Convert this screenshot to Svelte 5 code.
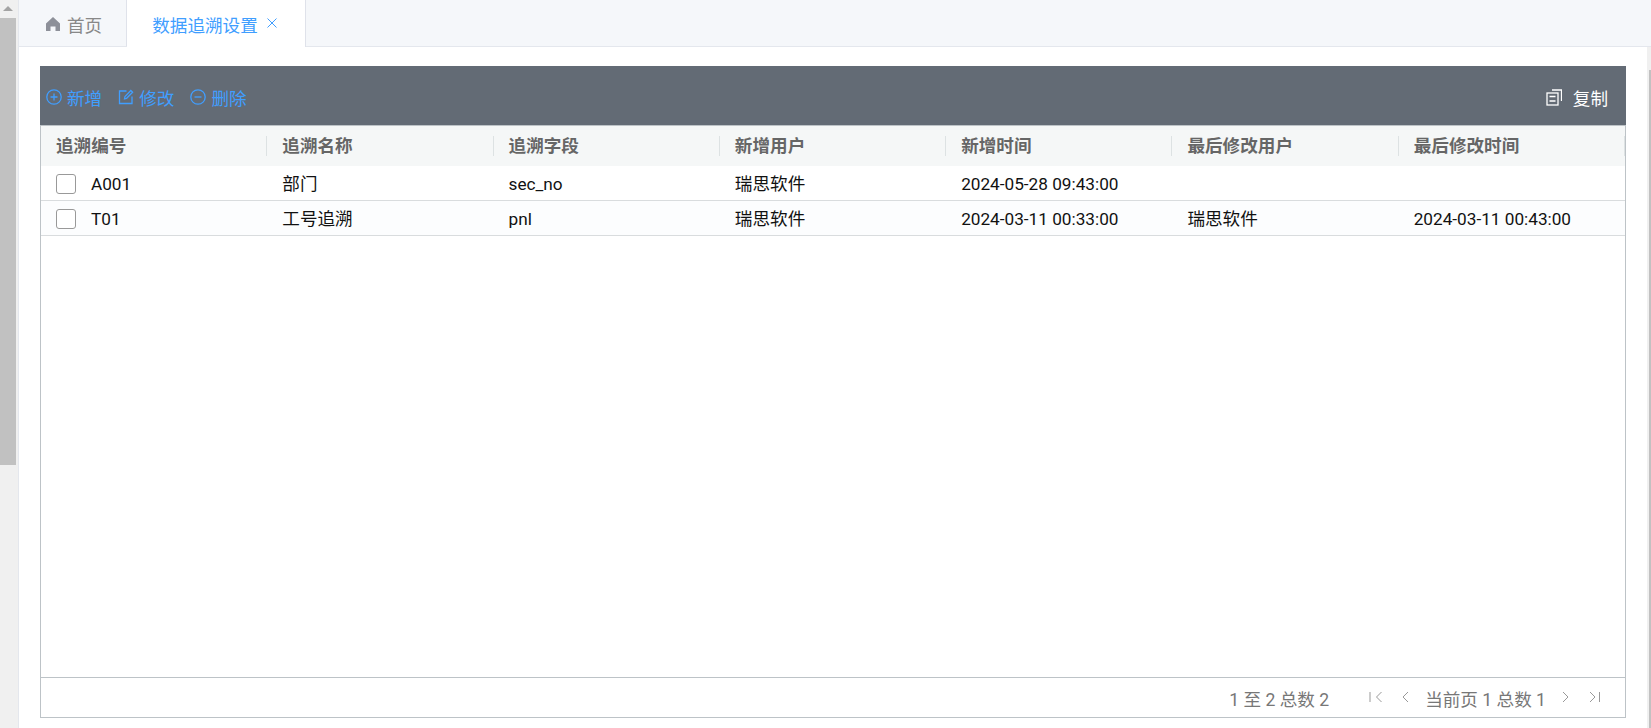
<script>
	const columns = ['追溯编号', '追溯名称', '追溯字段', '新增用户', '新增时间', '最后修改用户', '最后修改时间'];
	const rows = [
		['A001', '部门', 'sec_no', '瑞思软件', '2024-05-28 09:43:00', '', ''],
		['T01', '工号追溯', 'pnl', '瑞思软件', '2024-03-11 00:33:00', '瑞思软件', '2024-03-11 00:43:00']
	];

	function isLatin(value) {
		return /^[\x20-\x7e]*$/.test(value);
	}
</script>

<div class="page">
	<div class="scrollbar">
		<div class="arrow"></div>
		<div class="thumb"></div>
	</div>
	<div class="main">
		<div class="tabs">
			<div class="tab">
				<svg width="16" height="16" viewBox="0 0 16 16"><path d="M8 1 1 7.500V15h4.500v-4.500h5V15H15V7.500z" fill="#8d9099"/></svg>
				<span>首页</span>
			</div>
			<div class="tab active">
				<span>数据追溯设置</span>
				<svg class="close" width="12" height="12" viewBox="0 0 12 12"><path d="M1.500 1.500l9 9M10.500 1.500l-9 9" stroke="#409eff" fill="none"/></svg>
			</div>
		</div>
		<div class="workspace">
			<div class="content">
				<div class="toolbar">
					<div class="tool-group">
						<button class="tool">
							<svg width="16" height="16" viewBox="0 0 16 16"><circle cx="8" cy="8" r="7.200" /><path d="M8 4.500v7M4.500 8h7" /></svg>
							新增
						</button>
						<button class="tool">
							<svg width="16" height="16" viewBox="0 0 16 16"><path d="M8.500 2H1.500v12.500H14V7.500" /><path d="M6.500 9.800l.5-2.300L12.800 1.500l1.800 1.800-6 6z" /></svg>
							修改
						</button>
						<button class="tool">
							<svg width="16" height="16" viewBox="0 0 16 16"><circle cx="8" cy="8" r="7.200" /><path d="M4.500 8h7" /></svg>
							删除
						</button>
					</div>
					<button class="tool copy">
						<svg width="16" height="17" viewBox="0 0 16 17"><path d="M6 1h9.500v11" /><rect x="1" y="4" width="11" height="12" /><path d="M3.500 7.500h6M3.500 12h6" /></svg>
						<span>复制</span>
					</button>
				</div>
				<div class="grid">
					<div class="head row">
						{#each columns as col}
							<div class="cell">{col}</div>
						{/each}
					</div>
					<div class="body">
						{#each rows as row, i}
							<div class="row data" class:odd={i % 2 === 1}>
								{#each row as value, j}
									<div class="cell">
										{#if j === 0}<span class="check"></span>{/if}
										<span class="value" class:latin={isLatin(value)}>{value}</span>
									</div>
								{/each}
							</div>
						{/each}
					</div>
					<div class="footer">
						<span class="summary">1 至 2 总数 2</span>
						<div class="pager">
							<svg width="16" height="16" viewBox="0 0 16 16"><path d="M1 3v10M12.500 3 7.500 8l5 5" /></svg>
							<svg width="16" height="16" viewBox="0 0 16 16"><path d="M11 3 6 8l5 5" /></svg>
							<span class="page-text">当前页 1 总数 1</span>
							<svg width="16" height="16" viewBox="0 0 16 16"><path d="M5 3l5 5-5 5" /></svg>
							<svg width="16" height="16" viewBox="0 0 16 16"><path d="M13.500 3v10M4 3l5 5-5 5" /></svg>
						</div>
					</div>
				</div>
			</div>
			<div class="edge"><div class="edge-thumb"></div></div>
		</div>
	</div>
</div>

<style>
	:global(body) {
		margin: 0;
		background: #fff;
	}

	.page {
		display: flex;
		height: 728px;
		overflow: hidden;
		font-family: Roboto, "Noto Sans CJK SC", sans-serif;
		font-size: 17.6px;
	}

	.scrollbar {
		width: 18px;
		flex: none;
		background: #f0f0f0;
	}

	.arrow {
		height: 18px;
		width: 16px;
		position: relative;
	}

	.arrow::after {
		content: '';
		position: absolute;
		left: 3px;
		top: 6px;
		border: 5px solid transparent;
		border-top: 0;
		border-bottom: 5px solid #a3a3a3;
	}

	.thumb {
		width: 16px;
		height: 447px;
		background: #c1c1c1;
	}

	.main {
		flex: 1;
		min-width: 0;
		display: flex;
		flex-direction: column;
		border-left: 1px solid #e4e7ed;
	}

	.tabs {
		height: 47px;
		flex: none;
		display: flex;
		background: #f5f7fa;
		border-bottom: 1px solid #e4e7ed;
		box-sizing: border-box;
	}

	.tab {
		display: flex;
		align-items: center;
		gap: 6px;
		padding: 2px 24px 0 26px;
		color: #888;
		border-right: 1px solid #dfe2ea;
	}

	.tab.active {
		background: #fff;
		color: #409eff;
		gap: 8px;
		height: 47px;
		box-sizing: border-box;
		padding: 2px 27px 0 25px;
	}

	.close {
		margin-bottom: 4px;
	}

	.workspace {
		flex: 1;
		min-height: 0;
		display: flex;
	}

	.content {
		flex: 1;
		min-width: 0;
		padding: 19px 21px 10px 21px;
		display: flex;
		flex-direction: column;
	}

	.toolbar {
		height: 59px;
		flex: none;
		box-sizing: border-box;
		background: #636b75;
		display: flex;
		align-items: center;
		justify-content: space-between;
		padding: 3px 18px 0 6px;
	}

	.tool-group {
		display: flex;
		gap: 16px;
	}

	.tool {
		display: flex;
		align-items: center;
		gap: 5px;
		border: 0;
		padding: 0;
		background: none;
		color: #409eff;
		font: inherit;
	}

	.tool svg {
		fill: none;
		stroke: currentColor;
		stroke-width: 1.3;
	}

	.copy {
		color: #fff;
		gap: 11px;
	}

	.grid {
		flex: 1;
		display: flex;
		flex-direction: column;
		border: 1px solid #bdc3c7;
		min-height: 0;
	}

	.row {
		display: grid;
		grid-template-columns: repeat(7, 1fr);
	}

	.head {
		height: 40px;
		background: #f5f7f7;
		color: #666;
		font-weight: 700;
		align-items: center;
	}

	.head .cell {
		height: 20px;
		line-height: 20px;
		border-right: 1px solid #dde2e3;
		box-sizing: border-box;
		padding-left: 15px;
	}

	.body {
		flex: 1;
	}

	.data {
		height: 35px;
		box-sizing: border-box;
		border-bottom: 1px solid #d9dcde;
		color: #111;
		align-items: center;
	}

	.data.odd {
		background: #fcfdfe;
	}

	.data .cell {
		padding-left: 15px;
		display: flex;
		align-items: center;
		white-space: nowrap;
	}

	.value {
		padding-bottom: 2px;
	}

	.value.latin {
		font-size: 17.2px;
		padding: 2px 0 0;
	}

	.check {
		width: 18px;
		height: 18px;
		flex: none;
		border: 1px solid #999;
		border-radius: 3px;
		margin: 2px 15px 0 0;
		background: #fff;
	}

	.footer {
		height: 40px;
		flex: none;
		box-sizing: border-box;
		border-top: 1px solid #bdc3c7;
		display: flex;
		align-items: center;
		justify-content: flex-end;
		color: #777;
		padding: 2px 23px 0 0;
	}

	.pager {
		display: flex;
		align-items: center;
		gap: 12px;
		margin-left: 40px;
	}

	.pager svg {
		fill: none;
		stroke: #999;
		stroke-width: 1;
		margin-bottom: 4px;
	}

	.edge {
		width: 4px;
		flex: none;
		background: #f0f0f0;
		padding-top: 23px;
		box-sizing: border-box;
	}

	.edge-thumb {
		height: 100%;
		width: 2px;
		margin-left: 2px;
		background: #c1c1c1;
	}
</style>
